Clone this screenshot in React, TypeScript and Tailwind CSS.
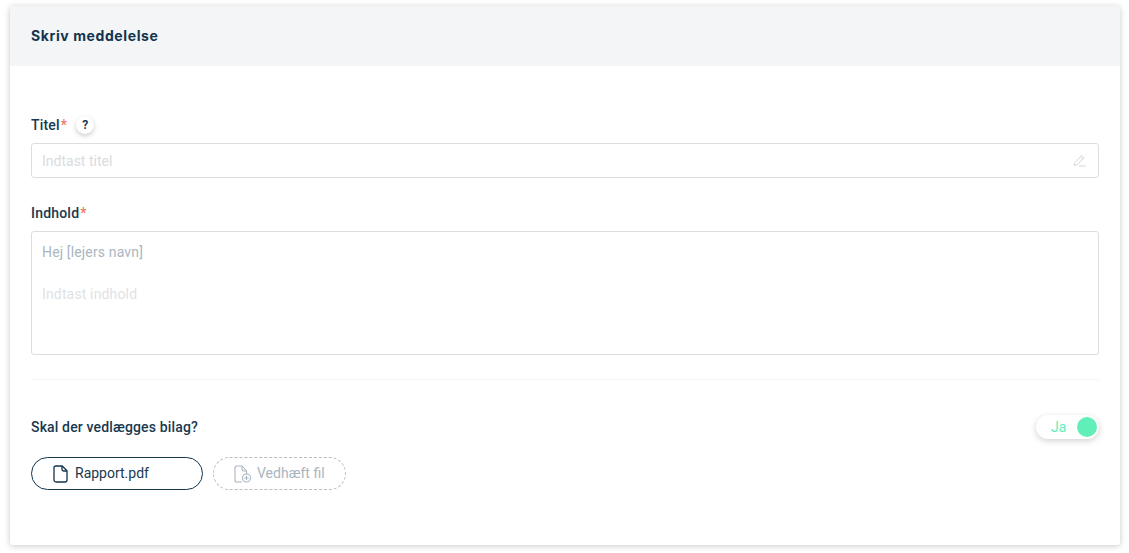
function PencilIcon() {
  return (
    <svg width="13" height="13" viewBox="0 0 13 13" fill="none" stroke="#d3d6d9" strokeWidth="1">
      <path d="M1.2 11.3 L1.8 8.6 L8.6 1.6 L11 3.8 L4 10.8 Z" strokeLinejoin="round" />
      <path d="M7.4 2.9 L9.8 5.2" />
      <path d="M6 12 L12.5 12" />
    </svg>
  );
}

function FileIcon() {
  return (
    <svg width="15" height="18" viewBox="0 0 15 18" fill="none" stroke="#12344d" strokeWidth="1.3" strokeLinejoin="round">
      <path d="M3 1 H9.2 L14 5.8 V15 A2 2 0 0 1 12 17 H3 A2 2 0 0 1 1 15 V3 A2 2 0 0 1 3 1 Z" />
      <path d="M9 1 V4.2 A1.8 1.8 0 0 0 10.8 6 H14" />
    </svg>
  );
}

function FileAddIcon() {
  return (
    <svg width="18" height="18" viewBox="0 0 18 18" fill="none" stroke="#a9b5c0" strokeWidth="1.1" strokeLinejoin="round">
      <path d="M8 17 H3 A2 2 0 0 1 1 15 V3 A2 2 0 0 1 3 1 H8 L12.5 6 V9" />
      <path d="M8 1 V4.2 A1.8 1.8 0 0 0 9.8 6 H12.5" />
      <circle cx="12.5" cy="13" r="4" />
      <path d="M12.5 11 V15 M10.5 13 H14.5" />
    </svg>
  );
}

export default function App() {
  return (
    <div className="min-h-[553px] bg-white pl-[10px] pr-[9px] pt-[6px] font-['Roboto',sans-serif] text-[#17394f]">
      <div className="h-[539px] overflow-hidden rounded-[3px] bg-white shadow-[0_1px_6px_rgba(0,0,0,0.22)]">
        <div className="flex h-[60px] items-center bg-[#f3f5f7] px-[21px] pb-[1px]">
          <h1 className="font-['Inter',sans-serif] text-[14px] font-bold tracking-[0.6px] text-[#12344d]">Skriv meddelelse</h1>
        </div>

        <div className="px-[21px] pt-[49px]">
          <div className="flex h-[20px] items-center text-[14px] font-medium tracking-[0.2px]">
            <span>Titel</span>
            <span className="ml-[1px] text-[#f2785c]">*</span>
            <span className="ml-[9px] flex h-[18px] w-[18px] items-center justify-center rounded-full bg-white text-[12px] font-bold shadow-[0_2px_5px_rgba(0,0,0,0.2)]">?</span>
          </div>
          <div className="mt-[8px] flex h-[35px] items-center justify-between rounded-[3px] border border-[#dcdfe1] pl-[10px] pr-[12px]">
            <span className="pt-[1px] text-[14px] text-[#d9dcdf]">Indtast titel</span>
            <PencilIcon />
          </div>

          <div className="mt-[25px] flex h-[20px] items-center text-[14px] font-medium tracking-[0.2px]">
            <span>Indhold</span>
            <span className="ml-[1px] text-[#f2785c]">*</span>
          </div>
          <div className="mt-[8px] h-[124px] rounded-[3px] border border-[#dcdfe1] px-[10px] pt-[10px] text-[14px] leading-[21px] tracking-[0.15px]">
            <p className="text-[#abb6c0]">Hej [lejers navn]</p>
            <p className="mt-[21px] text-[#dfe2e4]">Indtast indhold</p>
          </div>

          <div className="mt-[24px] h-px bg-[#f3f4f5]" />

          <div className="mt-[36px] flex h-[22px] items-center justify-between">
            <span className="text-[14px] font-medium tracking-[0.15px]">Skal der vedlægges bilag?</span>
            <div className="flex h-[24px] w-[63px] items-center justify-between rounded-full bg-white pl-[15px] pr-[2px] shadow-[0_2px_6px_rgba(0,0,0,0.18)]">
              <span className="text-[14px] text-[#61efb9]">Ja</span>
              <span className="h-[20px] w-[20px] rounded-full bg-[#61efb9]" />
            </div>
          </div>

          <div className="mt-[19px] flex gap-[10px]">
            <div className="flex h-[33px] w-[172px] items-center gap-[7px] rounded-full border border-[#12344d] pl-[21px] text-[14px]">
              <FileIcon />
              <span>Rapport.pdf</span>
            </div>
            <div className="flex h-[33px] w-[133px] items-center gap-[5px] rounded-full border border-dashed border-[#b5bcc3] pl-[20px] text-[14px] text-[#a9b5c0]">
              <FileAddIcon />
              <span>Vedhæft fil</span>
            </div>
          </div>
        </div>
      </div>
    </div>
  );
}
